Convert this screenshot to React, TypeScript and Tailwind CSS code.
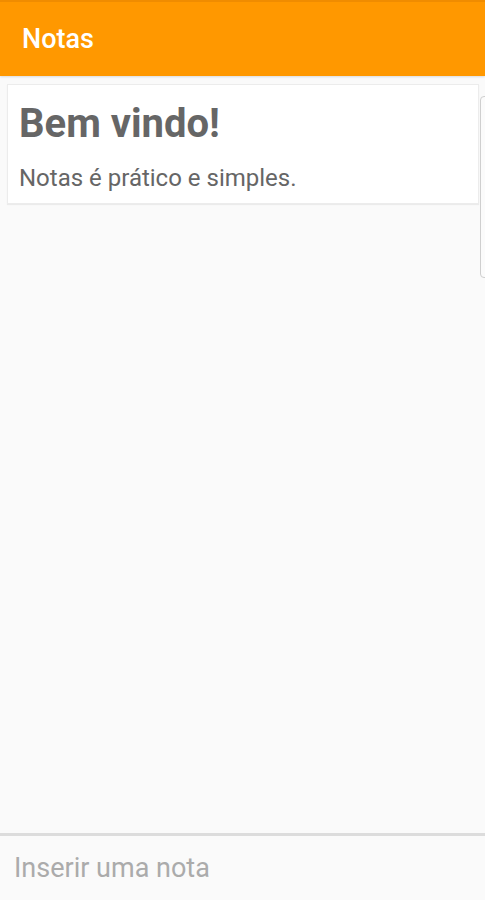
import React from "react";

export default function App() {
  return (
    <div
      className="w-[485px] h-[900px] bg-[#fafafa] flex flex-col overflow-hidden relative"
      style={{ fontFamily: "Roboto, 'Noto Sans', sans-serif" }}
    >
      <div className="h-[76px] bg-[#ff9800] border-t-2 border-[#f08c00] flex items-center px-[22px] shrink-0 shadow-[0_1px_2px_rgba(0,0,0,0.12)]">
        <span className="text-white text-[27px] font-medium leading-[30px]">Notas</span>
      </div>
      <div className="flex-1 relative">
        <div className="absolute left-[480px] top-[20px] w-[20px] h-[182px] border border-[#cfcfcf] rounded-l-[4px] bg-[#fbfbfb]" />
        <div className="ml-[7px] mr-[6px] mt-[8px] bg-white border border-[#ececec] shadow-[0_1px_1px_rgba(0,0,0,0.06)] px-[11px] pt-[15px] pb-[11px]">
          <div className="text-[#666666] text-[40px] font-bold leading-[48px]">Bem vindo!</div>
          <div className="text-[#666666] text-[24px] leading-[28px] mt-[16px]">Notas é prático e simples.</div>
        </div>
      </div>
      <div className="h-[3px] bg-[#dcdcdc] shrink-0" />
      <div className="h-[64px] bg-[#fafafa] flex items-center px-[14px] shrink-0">
        <span className="text-[#ababab] text-[27px] leading-[30px]">Inserir uma nota</span>
      </div>
    </div>
  );
}
